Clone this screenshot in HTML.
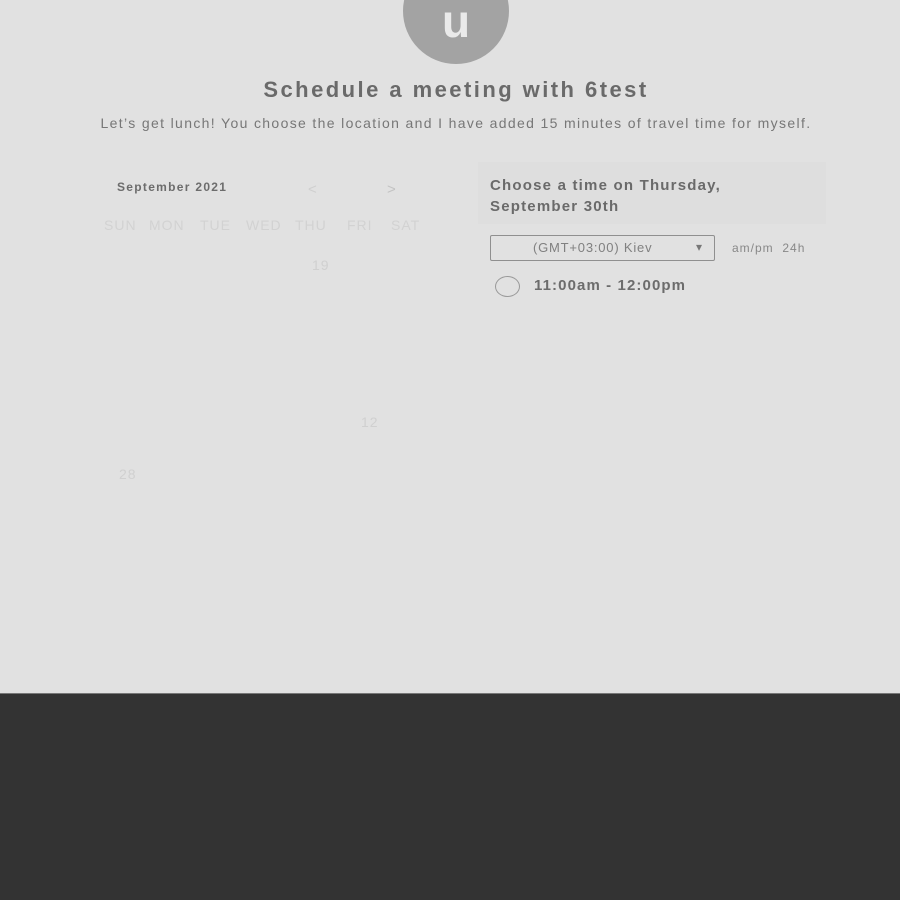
<!DOCTYPE html>
<html><head><meta charset="utf-8"><style>
*{margin:0;padding:0;box-sizing:border-box}
body{width:900px;height:900px;background:#e1e1e1;font-family:"Liberation Sans",sans-serif;position:relative;overflow:hidden}
.abs{position:absolute;white-space:nowrap}
.foot{position:absolute;left:0;top:693px;width:900px;height:207px;background:#333;border-top:1px solid #777}
.av{position:absolute;left:403px;top:-42px;width:106px;height:106px;border-radius:50%;background:#a3a3a3;color:#eaeaea;font-size:46px;font-weight:bold;text-align:center;line-height:126px}
.dow{color:#d2d2d2;font-size:14px;letter-spacing:1px}
.num{color:#d0d0d0;font-size:14px;letter-spacing:1px}
</style></head><body>
<div class="av">u</div>
<div class="abs" style="left:0;width:912px;text-align:center;top:77px;font-size:22px;font-weight:bold;color:#6a6a6a;letter-spacing:2.45px">Schedule a meeting with 6test</div>
<div class="abs" style="left:0;width:912px;text-align:center;top:115px;font-size:14px;color:#777;letter-spacing:1.35px">Let’s get lunch! You choose the location and I have added 15 minutes of travel time for myself.</div>
<div class="abs" style="left:117px;top:180px;font-size:12px;font-weight:bold;color:#6c6c6c;letter-spacing:1.3px">September 2021</div>
<div class="abs" style="left:308px;top:181px;font-size:15px;color:#cfcfcf">&lt;</div>
<div class="abs" style="left:387px;top:181px;font-size:15px;color:#c3c3c3">&gt;</div>
<div class="abs dow" style="left:104px;top:217px">SUN</div>
<div class="abs dow" style="left:149px;top:217px">MON</div>
<div class="abs dow" style="left:200px;top:217px">TUE</div>
<div class="abs dow" style="left:246px;top:217px">WED</div>
<div class="abs dow" style="left:295px;top:217px">THU</div>
<div class="abs dow" style="left:347px;top:217px">FRI</div>
<div class="abs dow" style="left:391px;top:217px">SAT</div>
<div class="abs num" style="left:312px;top:257px">19</div>
<div class="abs num" style="left:361px;top:414px">12</div>
<div class="abs num" style="left:119px;top:466px">28</div>
<div class="abs" style="left:478px;top:162px;width:348px;height:62px;background:#dedede"></div>
<div class="abs" style="left:490px;top:175px;font-size:15px;font-weight:bold;color:#6a6a6a;line-height:21px;letter-spacing:1.2px">Choose a time on Thursday,<br>September 30th</div>
<div class="abs" style="left:490px;top:235px;width:225px;height:26px;border:1px solid #8f8f8f;border-radius:2px"></div>
<div class="abs" style="left:533px;top:240px;font-size:13px;color:#808080;letter-spacing:0.8px">(GMT+03:00) Kiev</div>
<div class="abs" style="left:696px;top:240px;font-size:12px;color:#777">▾</div>
<div class="abs" style="left:732px;top:241px;font-size:12px;color:#888;letter-spacing:1px">am/pm&nbsp; 24h</div>
<div class="abs" style="left:495px;top:276px;width:25px;height:21px;border:1px solid #999;border-radius:50%"></div>
<div class="abs" style="left:534px;top:277px;font-size:15px;font-weight:bold;color:#6c6c6c;letter-spacing:1.1px">11:00am - 12:00pm</div>
<div class="foot"></div>
</body></html>
